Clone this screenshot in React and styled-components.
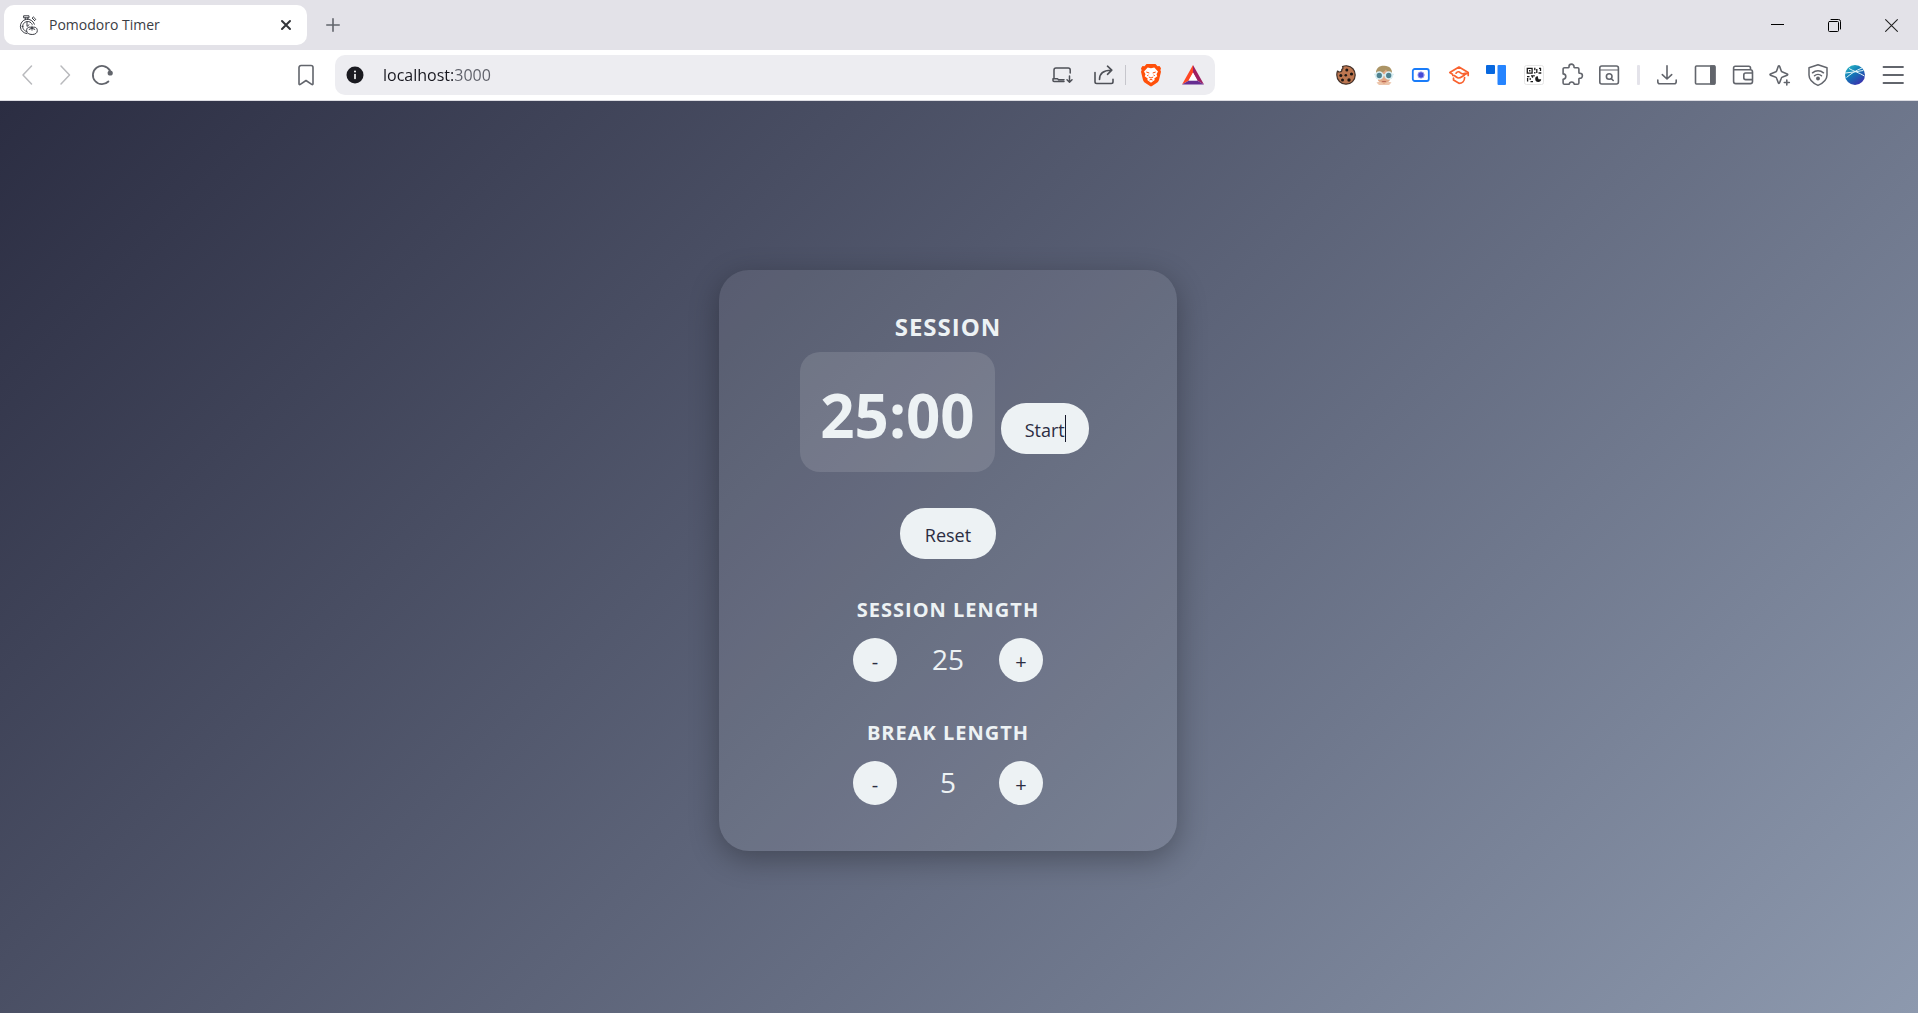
import React, { useState } from "react";
import styled, { createGlobalStyle } from "styled-components";

const GlobalStyle = createGlobalStyle`
  *, *::before, *::after { box-sizing: border-box; }
  body {
    margin: 0;
    font-family: "Segoe UI", "Open Sans", "Noto Sans", sans-serif;
    color: #edf2f4;
  }
  button, input { font-family: inherit; }
`;

const Window = styled.div`
  display: flex;
  flex-direction: column;
  min-height: 100vh;
`;

const TabStrip = styled.header`
  display: flex;
  align-items: center;
  height: 50px;
  padding-left: 4px;
  background: #e3e2e8;
`;

const Tab = styled.div`
  display: flex;
  align-items: center;
  gap: 10px;
  width: 303px;
  height: 40px;
  padding: 0 12px 0 15px;
  border-radius: 10px;
  background: #fff;
  color: #3b3d44;
`;

const TabTitle = styled.span`
  flex: 1;
  font-size: 14px;
  line-height: 20px;
`;

const IconButton = styled.button`
  display: flex;
  align-items: center;
  justify-content: center;
  flex: none;
  width: ${(p) => p.$width || 20}px;
  height: 24px;
  padding: 0;
  border: 0;
  background: none;
  color: ${(p) => p.$color || "#62656c"};
  cursor: pointer;

  svg { display: block; flex: none; overflow: visible; }
`;

const NewTab = styled(IconButton)`
  margin-left: 14px;
`;

const BookmarkButton = styled(IconButton)`
  margin-left: 184px;
`;

const WindowControls = styled.div`
  display: flex;
  gap: 37px;
  margin-left: auto;
  padding-right: 17px;
`;

const Toolbar = styled.nav`
  display: flex;
  align-items: center;
  height: 51px;
  padding: 0 15px 0 18px;
  border-bottom: 1px solid #dcdce2;
  background: #fff;
`;

const NavButtons = styled.div`
  display: flex;
  gap: 17px;
`;

const AddressBar = styled.div`
  display: flex;
  align-items: center;
  flex: 1;
  height: 40px;
  margin: 0 121px 0 19px;
  padding: 0 12px 0 10px;
  border-radius: 10px;
  background: #ededf1;
`;

const Url = styled.input`
  flex: 1;
  min-width: 0;
  height: 28px;
  margin-left: 18px;
  padding: 0;
  border: 0;
  outline: 0;
  background: linear-gradient(90deg, #17171f 71px, #5d5f68 71px);
  background-clip: text;
  color: transparent;
  font-size: 16px;
  line-height: 28px;
`;

const BarActions = styled.div`
  display: flex;
  align-items: center;
  gap: 22px;
`;

const BarDivider = styled.span`
  width: 1px;
  height: 20px;
  margin: 0 -7px 0 -11px;
  background: #c6c6cc;
`;

const Extensions = styled.div`
  display: flex;
  align-items: center;
  justify-content: space-between;
  flex: none;
  width: 567px;
`;

const Divider = styled.span`
  width: 3px;
  height: 20px;
  border-radius: 1px;
  background: #e4e3ea;
`;

const Page = styled.main`
  display: flex;
  flex: 1;
  align-items: center;
  justify-content: center;
  padding: 7px 22px 0 0;
  background: linear-gradient(135deg, #2b2d42, #8d99ae);
`;

const Card = styled.section`
  display: flex;
  flex-direction: column;
  align-items: center;
  gap: 37px;
  width: 458px;
  padding: 41px 0 46px;
  border-radius: 30px;
  background: rgba(255, 255, 255, 0.08);
  box-shadow: 0 8px 30px rgba(0, 0, 0, 0.3);
`;

const Session = styled.div`
  display: flex;
  flex-direction: column;
  align-items: center;
  gap: 9px;
`;

const Title = styled.h1`
  margin: 0;
  font-size: 24px;
  line-height: 32px;
  font-weight: 700;
  letter-spacing: 1px;
  text-transform: uppercase;
`;

const TimerRow = styled.div`
  display: flex;
  align-items: flex-end;
  gap: 6px;
  padding-right: 7px;
`;

const Time = styled.div`
  padding: 23px 20px 17px;
  border-radius: 20px;
  background: rgba(255, 255, 255, 0.12);
  font-size: 60px;
  line-height: 80px;
  font-weight: 700;
`;

const PillButton = styled.button`
  position: relative;
  height: 51px;
  padding: 3px 24px 0;
  border: 0;
  border-radius: 25px;
  background: #edf2f4;
  color: #2b2d42;
  font-size: 18px;
  cursor: pointer;
`;

const StartButton = styled(PillButton)`
  margin-bottom: 18px;
`;

const ResetButton = styled(PillButton)`
  margin-top: -1px;
  padding: 3px 25px 0;
`;

const TextCursor = styled.span`
  position: absolute;
  top: 12px;
  right: 23px;
  width: 1px;
  height: 27px;
  background: #16182a;
`;

const Setting = styled.div`
  display: flex;
  flex-direction: column;
  align-items: center;
  gap: 14px;
`;

const SettingTitle = styled.h2`
  margin: 0;
  font-size: 20px;
  line-height: 28px;
  font-weight: 700;
  letter-spacing: 1px;
  text-transform: uppercase;
`;

const Stepper = styled.div`
  display: flex;
  align-items: center;
`;

const StepButton = styled.button`
  width: 44px;
  height: 44px;
  padding: 4px 0 0;
  border: 0;
  border-radius: 50%;
  background: #edf2f4;
  color: #2b2d42;
  font-size: 20px;
  line-height: 28px;
  cursor: pointer;
`;

const Value = styled.output`
  width: 102px;
  padding-bottom: 2px;
  font-size: 28px;
  line-height: 42px;
  text-align: center;
`;

function Svg({ size = 20, box = 20, stroke = 1.5, children }) {
  return (
    <svg
      width={size}
      height={size}
      viewBox={`0 0 ${box} ${box}`}
      fill="none"
      stroke="currentColor"
      strokeWidth={stroke}
      strokeLinecap="round"
      strokeLinejoin="round"
      aria-hidden="true"
    >
      {children}
    </svg>
  );
}

const StopwatchIcon = () => (
  <Svg stroke={1}>
    <path d="M5 .8h5v2H5zM6.300 2.800v1.600M8.800 2.800v1.600M13.500 3.500l2 2M14.600 2.200l2.200 2.200-1.200 1.200-2.200-2.200z" />
    <path d="M15.400 9.200A7.200 7.200 0 1 0 8 18.600" />
    <path d="M13.200 9.400A5 5 0 1 0 7.600 16.400" strokeDasharray="1.6 .8" />
    <path d="M8 8.200v3.200l2-1.600M3 11.400h1M8 6.500v1" />
    <path d="M13 12.600c-3-1.600-5.600.2-5.400 3 .2 2.600 2.400 3.900 5.600 3.900 3.200 0 5.100-1.500 5.100-3.900 0-2.800-2.500-4.400-5.300-3zM10.200 14.400l2.800-1.200 2.800 1.200M13 11.200v4" />
  </Svg>
);
const CloseIcon = () => (
  <Svg size={10} box={10} stroke={2}><path d="M1 1l8 8M9 1L1 9" /></Svg>
);
const PlusIcon = () => (
  <Svg size={14} box={14} stroke={1.6}><path d="M7 .8v12.400M.8 7h12.400" /></Svg>
);
const MinimizeIcon = () => (
  <Svg size={13} box={13} stroke={1}><path d="M.0 5.500h13" strokeLinecap="butt" /></Svg>
);
const RestoreIcon = () => (
  <Svg size={13} box={13} stroke={1}>
    <rect x=".5" y="2.500" width="10" height="10" rx="1" />
    <path d="M3 .5h7.500a2 2 0 0 1 2 2V10" />
  </Svg>
);
const WinCloseIcon = () => (
  <Svg size={13} box={13} stroke={1.1}><path d="M.6.6l11.800 11.800M12.400.6L.6 12.400" /></Svg>
);
const BackIcon = () => <Svg><path d="M13.500 1L5 10l8.500 9" /></Svg>;
const ForwardIcon = () => <Svg><path d="M6 1l8.500 9L6 19" /></Svg>;
const ReloadIcon = () => (
  <Svg stroke={1.8}>
    <path d="M16.400 16.500A9.100 9.100 0 1 1 17.600 5" />
    <circle cx="18.200" cy="8" r="2.600" fill="currentColor" stroke="none" />
    <path d="M17.400 4.800l1 2" />
  </Svg>
);
const BookmarkIcon = () => (
  <Svg stroke={1.6}>
    <path d="M3 2.500A2 2 0 0 1 5 .5h10a2 2 0 0 1 2 2v16.300c0 .8-.7 1-1.300.6L10 15.500l-5.700 3.900c-.6.400-1.300.2-1.300-.6z" />
  </Svg>
);
const InfoIcon = () => (
  <Svg size={18} box={18} stroke={2}>
    <circle cx="9" cy="9" r="8.500" fill="currentColor" stroke="none" />
    <path d="M9 8.500v4" stroke="#fff" strokeWidth="1.600" />
    <circle cx="9" cy="5.500" r="1" fill="#fff" stroke="none" />
  </Svg>
);
const InstallIcon = () => (
  <Svg stroke={1.5}>
    <path d="M18.200 8V5a2 2 0 0 0-2-2H4a2 2 0 0 0-2 2v8.500M12 16.500H2a1 1 0 0 1-1-1v-1.800h4.500l1 1H12M17.500 11v6M15 14.800l2.500 2.400 2.500-2.400" />
  </Svg>
);
const ShareIcon = () => (
  <Svg stroke={1.6}>
    <path d="M1 7.500v9.300c0 .9.700 1.700 1.700 1.700h14.600c1 0 1.700-.8 1.700-1.700v-2.500M5.500 14.500C5.500 8.500 9 5.200 17 5.200M13.500 1.200L17.800 5.200 13.500 9.300" />
  </Svg>
);
const BraveIcon = () => (
  <svg width="22" height="24" viewBox="0 0 22 24" aria-hidden="true">
    <path fill="#ff500a" d="M6.500 1h9l2 2.200 2-.3 1.500 2.400-.6 2 .6 1.500-2 8.200c-.3 1.200-1 2-2 2.700L12 23c-.7.500-1.300.5-2 0l-5-3.300c-1-.7-1.700-1.500-2-2.700L1 8.800l.6-1.500-.6-2 1.500-2.400 2 .3z" />
    <path fill="#fff" d="M11 5.200l3.300-.7 3.700 4-1.500 2.700.8 2-3 2.200.4 1.600L11 19.800 7.300 17l.4-1.600-3-2.200.8-2L4 8.500l3.700-4z" />
    <path fill="none" stroke="#ff500a" strokeWidth="1" d="M6.300 9l3 1M15.700 9l-3 1M8.800 14L11 15l2.200-1M9.500 17l1.500-.6 1.500.6M7.200 12.600l1.300-.6M14.800 12.600l-1.300-.6" />
  </svg>
);
const BatIcon = () => (
  <svg width="24" height="22" viewBox="0 0 24 22" aria-hidden="true">
    <path fill="#ff4724" d="M12 1L1 20.500l7-4L12 9z" />
    <path fill="#9e1f63" d="M12 1l11 19.500-7-4L12 9z" />
    <path fill="#662d91" d="M1 20.500h22l-7-4H8z" />
    <path fill="#fff" d="M12 8.500l-4.500 8h9z" />
  </svg>
);
const CookieIcon = () => (
  <Svg stroke={1.2}>
    <path fill="#bd7650" stroke="#44322a" d="M6.500 1.600c1.200-.6 3-1 4.500-.8 4.800.4 8.200 4.400 8.200 9.200 0 5.200-4 9.200-9.200 9.200S.8 15 .8 10c0-1.600.2-2.900.7-4 .8.900 2 1.200 3 .8 1.200-.4 1.600-1.400 1.300-2.500 1.200-.3 1.500-1.500.7-2.700z" />
    <g fill="#1d1714" stroke="none">
      <circle cx="10.800" cy="5" r="1.500" /><circle cx="15.500" cy="9" r="1.600" />
      <circle cx="4.800" cy="10.500" r="1.500" /><circle cx="9.800" cy="10.200" r="1.300" />
      <circle cx="6.500" cy="15" r="1.500" /><circle cx="13" cy="15" r="1.700" />
    </g>
  </Svg>
);
const FaceIcon = () => (
  <svg width="20" height="20" viewBox="0 0 20 20" aria-hidden="true">
    <path fill="#ab9465" d="M2 9C1.500 3 5.500.5 10.500.8 15.500 1 18.500 4 18 9l-1 5H3z" />
    <path fill="#e3a987" d="M4 8.500c4 0 6-1.500 8-4 1 2 2.500 3.500 4.500 4l-.8 7L12 19H7.500L4 15.500z" />
    <path fill="#ecc5ab" d="M2.500 17.500l3.500-1 4 2.500 4-2.500 3.500 1L15 20H5z" />
    <path fill="#b96855" d="M7.500 16h5l-1 1h-3z" />
    <circle cx="5.300" cy="10.500" r="3.500" fill="#4f8290" stroke="#d9eef2" strokeWidth="1.700" />
    <circle cx="14.700" cy="10.500" r="3.500" fill="#4f8290" stroke="#d9eef2" strokeWidth="1.700" />
    <path stroke="#d9eef2" strokeWidth="1.300" d="M8.500 10h3M0 9.500h2M18 9.500h2" />
  </svg>
);
const RecorderIcon = () => (
  <Svg stroke={1.8}>
    <rect x="1.800" y="4" width="16" height="12" rx="2" stroke="#1a7cf9" />
    <circle cx="10" cy="10" r="3.200" fill="#4549d6" stroke="#a8acf1" strokeWidth=".8" />
  </Svg>
);
const GraduateIcon = () => (
  <Svg stroke={1.7}>
    <path
      stroke="#f9622f"
      d="M3.500 9.200L.8 7.600 10 2l9.200 5.600-2.700 1.600M19.200 7.800v2.600M7 8.200c1.500-1.800 3-1.800 4.200-.6 1.500 1.400 3 1.600 5 .6M3.800 10.500c2.500-.4 3.500 2.500 5.700 2.500 2 0 3.500-1.500 6-3M4.500 13v2l5.500 3.300c3 0 5.600-2 5.600-5.800"
    />
  </Svg>
);
const TrelloIcon = () => (
  <svg width="20" height="20" viewBox="0 0 20 20" aria-hidden="true">
    <rect width="9" height="9" rx="1" fill="#0868df" />
    <rect x="11.500" width="8.500" height="20" rx="1" fill="#2684ff" />
  </svg>
);
const QrIcon = () => (
  <svg width="20" height="20" viewBox="0 0 20 20" aria-hidden="true">
    <rect x=".5" y=".5" width="19" height="19" rx="2" fill="#fff" stroke="#e5e5e5" />
    <path fill="none" stroke="#1b1b1b" strokeWidth="1.300" d="M3.300 3.300h4.800v4.800H3.300zM10.800 2.700v2.500M10.800 7v1.500M12.800 8.100V4M15 3.300h2M16.500 3v3M14.500 8h2.800M3 11.600h2.500M7 10.800h1.500v2M3.600 13v3.500M5.500 14h1.500M6.500 16.600h2.500M10 10v1.500" />
    <path fill="#1b1b1b" d="M5 5h1.500v1.500H5zM13.600 11a3 3 0 1 0 3.600 3.300h-2.700z" />
  </svg>
);
const PuzzleIcon = () => (
  <Svg size={22} box={22} stroke={1.6}>
    <path d="M3.500 3.800h3.800c.8 0 .7-.6.700-1.200a2.500 2.500 0 0 1 5 0c0 .6-.1 1.200.7 1.200h2.900c.9 0 1.300.5 1.300 1.300v3.500c0 .8.6.7 1 .7a2.500 2.500 0 0 1 0 5c-.4 0-1-.1-1 .7v3.900c0 .9-.5 1.300-1.400 1.300h-3.300c-.3-3-4.700-3-5 0H3.500c-.9 0-1.400-.5-1.400-1.300v-3.600c3.600-.3 3.600-5.100 0-5.400V5.100c0-.8.500-1.300 1.400-1.300z" />
  </Svg>
);
const SearchPanelIcon = () => (
  <Svg stroke={1.6}>
    <rect x=".8" y="1" width="18.600" height="18" rx="2" /><path d="M1 5h18.200" strokeWidth="1.200" />
    <circle cx="10.200" cy="11.500" r="2.800" /><path d="M12.400 13.700l1.800 1.800" />
  </Svg>
);
const DownloadIcon = () => (
  <Svg stroke={1.6}><path d="M10 .8v13M5.300 9.600L10 14l4.700-4.400M.8 15v1.800c0 1.200.8 2 2 2h14.400c1.200 0 2-.8 2-2V15" /></Svg>
);
const SidebarIcon = () => (
  <Svg stroke={1.6}>
    <rect x=".5" y="1" width="19.500" height="18" rx="1" /><path fill="currentColor" d="M15.800 1H19.500v18h-3.700z" />
  </Svg>
);
const WalletIcon = () => (
  <Svg stroke={1.6}>
    <path d="M17.500 4.800V3c0-1-.6-1.800-1.700-1.800H2.200C1.300 1.200.6 1.900.6 3v13.400c0 1.300.8 2.200 2.200 2.200h14.500c1.300 0 2.200-.8 2.200-2.200V7c0-1.300-.8-2.200-2.200-2.200H.8M19.500 8h-6.800c-1.200 0-1.900.8-1.900 1.900v2.800c0 1.100.7 1.900 1.900 1.900h6.800z" />
  </Svg>
);
const SparkleIcon = () => (
  <Svg stroke={1.6}>
    <path d="M8.300 1.200c.4-.7 1-.7 1.300 0l1.600 4.500c.2.700.7 1.200 1.400 1.400l4.600 1.800c.7.300.7 1 0 1.300l-4.600 1.800c-.7.200-1.200.7-1.400 1.400l-1.600 4.400c-.3.700-.9.700-1.300 0l-1.600-4.400c-.2-.7-.7-1.200-1.400-1.400L.5 10.200c-.7-.3-.7-1 0-1.300l4.800-1.800c.7-.2 1.200-.7 1.400-1.400zM16.800 15v5M14.300 17.500h5" />
  </Svg>
);
const ShieldIcon = () => (
  <Svg size={22} box={22} stroke={1.5}>
    <path d="M11 .8L2 3.800V11c0 4.800 3.600 8 9 10.400 5.400-2.400 9-5.600 9-10.400V3.800z" />
    <path d="M5.500 8.800c3.200-2.600 7.800-2.600 11 0M7.500 11.800c2-1.800 5-1.800 7 0" /><circle cx="11" cy="14.500" r="1.200" fill="currentColor" />
  </Svg>
);
const GlobeIcon = () => (
  <svg width="20" height="20" viewBox="0 0 20 20" aria-hidden="true">
    <defs>
      <linearGradient id="globe" x1="0" y1="0" x2=".7" y2="1">
        <stop offset="0" stopColor="#2fc4c8" /><stop offset=".5" stopColor="#1277b6" /><stop offset="1" stopColor="#3b30ae" />
      </linearGradient>
    </defs>
    <circle cx="10" cy="10" r="10" fill="url(#globe)" />
    <path fill="none" stroke="#e4f7fa" strokeWidth="1" d="M1.500 12.500C6 8.500 11 5.500 17 3M4 3.500c4 2.500 10 4 15.500 7.500M.3 8c6-.6 12-1.500 18-2.500" />
  </svg>
);
const MenuIcon = () => (
  <Svg stroke={1.8}><path d="M.5 2h19.500M.5 10h19.500M.5 18h19.500" /></Svg>
);

const extensions = [
  ["Cookie editor", CookieIcon],
  ["Avatar", FaceIcon],
  ["Recorder", RecorderIcon],
  ["Courses", GraduateIcon],
  ["Boards", TrelloIcon],
  ["QR code", QrIcon],
  ["Extensions", PuzzleIcon],
  ["Search tabs", SearchPanelIcon],
];

const tools = [
  ["Downloads", DownloadIcon],
  ["Sidebar", SidebarIcon],
  ["Wallet", WalletIcon],
  ["Assistant", SparkleIcon],
  ["VPN", ShieldIcon],
  ["Profile", GlobeIcon],
  ["Menu", MenuIcon],
];

function BrowserChrome() {
  return (
    <>
      <TabStrip>
        <Tab>
          <StopwatchIcon />
          <TabTitle>Pomodoro Timer</TabTitle>
          <IconButton aria-label="Close tab" $width={18} $color="#33353a"><CloseIcon /></IconButton>
        </Tab>
        <NewTab aria-label="New tab" $width={24}><PlusIcon /></NewTab>
        <WindowControls>
          <IconButton aria-label="Minimize" $color="#000"><MinimizeIcon /></IconButton>
          <IconButton aria-label="Restore" $color="#000"><RestoreIcon /></IconButton>
          <IconButton aria-label="Close window" $color="#222"><WinCloseIcon /></IconButton>
        </WindowControls>
      </TabStrip>
      <Toolbar>
        <NavButtons>
          <IconButton aria-label="Back" $color="#b9babd"><BackIcon /></IconButton>
          <IconButton aria-label="Forward" $color="#b9babd"><ForwardIcon /></IconButton>
          <IconButton aria-label="Reload"><ReloadIcon /></IconButton>
        </NavButtons>
        <BookmarkButton aria-label="Bookmark"><BookmarkIcon /></BookmarkButton>
        <AddressBar>
          <IconButton aria-label="Site information" $color="#1a1a20"><InfoIcon /></IconButton>
          <Url aria-label="Address" defaultValue="localhost:3000" spellCheck={false} />
          <BarActions>
            <IconButton aria-label="Install app" $color="#4e5057"><InstallIcon /></IconButton>
            <IconButton aria-label="Share" $color="#4e5057"><ShareIcon /></IconButton>
            <BarDivider />
            <IconButton aria-label="Shields"><BraveIcon /></IconButton>
            <IconButton aria-label="Rewards"><BatIcon /></IconButton>
          </BarActions>
        </AddressBar>
        <Extensions>
          {extensions.map(([label, Icon]) => (
            <IconButton key={label} aria-label={label}><Icon /></IconButton>
          ))}
          <Divider />
          {tools.map(([label, Icon]) => (
            <IconButton key={label} aria-label={label}><Icon /></IconButton>
          ))}
        </Extensions>
      </Toolbar>
    </>
  );
}

function LengthSetting({ title, value, onChange }) {
  return (
    <Setting>
      <SettingTitle>{title}</SettingTitle>
      <Stepper>
        <StepButton aria-label={`Decrease ${title}`} onClick={() => onChange(Math.max(1, value - 1))}>-</StepButton>
        <Value aria-label={title}>{value}</Value>
        <StepButton aria-label={`Increase ${title}`} onClick={() => onChange(Math.min(60, value + 1))}>+</StepButton>
      </Stepper>
    </Setting>
  );
}

export default function App() {
  const [session, setSession] = useState(25);
  const [rest, setRest] = useState(5);
  const reset = () => {
    setSession(25);
    setRest(5);
  };

  return (
    <Window>
      <GlobalStyle />
      <BrowserChrome />
      <Page>
        <Card>
          <Session>
            <Title>Session</Title>
            <TimerRow>
              <Time>{String(session).padStart(2, "0")}:00</Time>
              <StartButton>Start<TextCursor /></StartButton>
            </TimerRow>
          </Session>
          <ResetButton onClick={reset}>Reset</ResetButton>
          <LengthSetting title="Session Length" value={session} onChange={setSession} />
          <LengthSetting title="Break Length" value={rest} onChange={setRest} />
        </Card>
      </Page>
    </Window>
  );
}
